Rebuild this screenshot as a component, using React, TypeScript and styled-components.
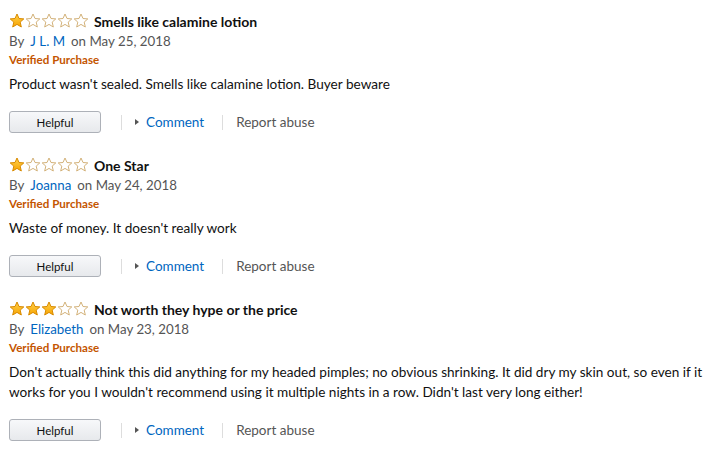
import React from "react";
import styled, { createGlobalStyle } from "styled-components";

const Global = createGlobalStyle`
  body {
    margin: 8px;
    background: #fff;
    font-family: Lato, "Liberation Sans", Arial, sans-serif;
    color: #111;
  }
`;

const Page = styled.div`
  padding-top: 3px;
  padding-left: 1px;
  display: flex;
  flex-direction: column;
`;

const Review = styled.div`
  display: flex;
  flex-direction: column;
  margin-bottom: 22px;
`;

const Header = styled.div`
  display: flex;
  align-items: center;
  height: 20px;
  gap: 5px;
`;

const Stars = styled.div`
  display: flex;
`;

const Title = styled.span`
  font-size: 14px;
  font-weight: 700;
  color: #111;
`;

const ByLine = styled.div`
  font-size: 13.3px;
  line-height: 20px;
  color: #555;
  display: flex;
  gap: 6px;
`;

const Author = styled.span`
  color: #0066c0;
`;

const Verified = styled.div`
  font-size: 11.6px;
  font-weight: 700;
  line-height: 18px;
  color: #c45500;
`;

const Body = styled.p`
  margin: 5px 0 0;
  font-size: 13.6px;
  line-height: 20px;
  color: #111;
  padding-right: 4px;
`;

const Actions = styled.div`
  margin-top: 17px;
  display: flex;
  align-items: center;
  height: 22px;
`;

const HelpfulButton = styled.button`
  width: 92px;
  height: 22px;
  border: 1px solid #adb1b8;
  border-radius: 3px;
  background: linear-gradient(to bottom, #f7f8fa, #e7e9ec);
  font-family: inherit;
  font-size: 11.5px;
  color: #111;
  padding: 0;
  cursor: pointer;
`;

const Sep = styled.span<{ $left: number }>`
  width: 1px;
  height: 15px;
  background: #ddd;
  margin: 0 13px 0 ${(p) => p.$left}px;
`;

const CommentLink = styled.a`
  display: flex;
  align-items: center;
  gap: 7px;
  font-size: 13.5px;
  color: #0066c0;
  text-decoration: none;
`;

const Caret = styled.span`
  width: 0;
  height: 0;
  border-top: 3.5px solid transparent;
  border-bottom: 3.5px solid transparent;
  border-left: 4px solid #555;
`;

const Report = styled.a`
  font-size: 13.5px;
  color: #555;
  text-decoration: none;
`;

const StarIcon: React.FC<{ filled: boolean; id: string }> = ({ filled, id }) => (
  <svg width="16" height="16" viewBox="0 0 16 16">
    <defs>
      <linearGradient id={id} x1="0" y1="0" x2="0" y2="1">
        <stop offset="0" stopColor="#ffd24d" />
        <stop offset="1" stopColor="#f7a300" />
      </linearGradient>
    </defs>
    <path
      d="M8 1 L10 5.5 L14.8 5.9 L11.2 9.1 L12.3 14 L8 11.4 L3.7 14 L4.8 9.1 L1.2 5.9 L6 5.5 Z"
      fill={filled ? `url(#${id})` : "#fff"}
      stroke={filled ? "#d88a00" : "#d3b27a"}
      strokeWidth="1"
      strokeLinejoin="round"
    />
  </svg>
);

const Rating: React.FC<{ value: number; rid: number }> = ({ value, rid }) => (
  <Stars>
    {[0, 1, 2, 3, 4].map((i) => (
      <StarIcon key={i} filled={i < value} id={`g${rid}-${i}`} />
    ))}
  </Stars>
);

const reviews = [
  {
    rating: 1,
    title: "Smells like calamine lotion",
    author: "J L. M",
    date: "May 25, 2018",
    body: "Product wasn't sealed. Smells like calamine lotion. Buyer beware",
  },
  {
    rating: 1,
    title: "One Star",
    author: "Joanna",
    date: "May 24, 2018",
    body: "Waste of money. It doesn't really work",
  },
  {
    rating: 3,
    title: "Not worth they hype or the price",
    author: "Elizabeth",
    date: "May 23, 2018",
    body: "Don't actually think this did anything for my headed pimples; no obvious shrinking. It did dry my skin out, so even if it works for you I wouldn't recommend using it multiple nights in a row. Didn't last very long either!",
  },
];

export default function App() {
  return (
    <>
      <Global />
      <Page>
        {reviews.map((r, idx) => (
          <Review key={idx}>
            <Header>
              <Rating value={r.rating} rid={idx} />
              <Title>{r.title}</Title>
            </Header>
            <ByLine>
              <span>By</span>
              <Author>{r.author}</Author>
              <span>on {r.date}</span>
            </ByLine>
            <Verified>Verified Purchase</Verified>
            <Body>{r.body}</Body>
            <Actions>
              <HelpfulButton>Helpful</HelpfulButton>
              <Sep $left={20} />
              <CommentLink href="#">
                <Caret />
                Comment
              </CommentLink>
              <Sep $left={18} />
              <Report href="#">Report abuse</Report>
            </Actions>
          </Review>
        ))}
      </Page>
    </>
  );
}
